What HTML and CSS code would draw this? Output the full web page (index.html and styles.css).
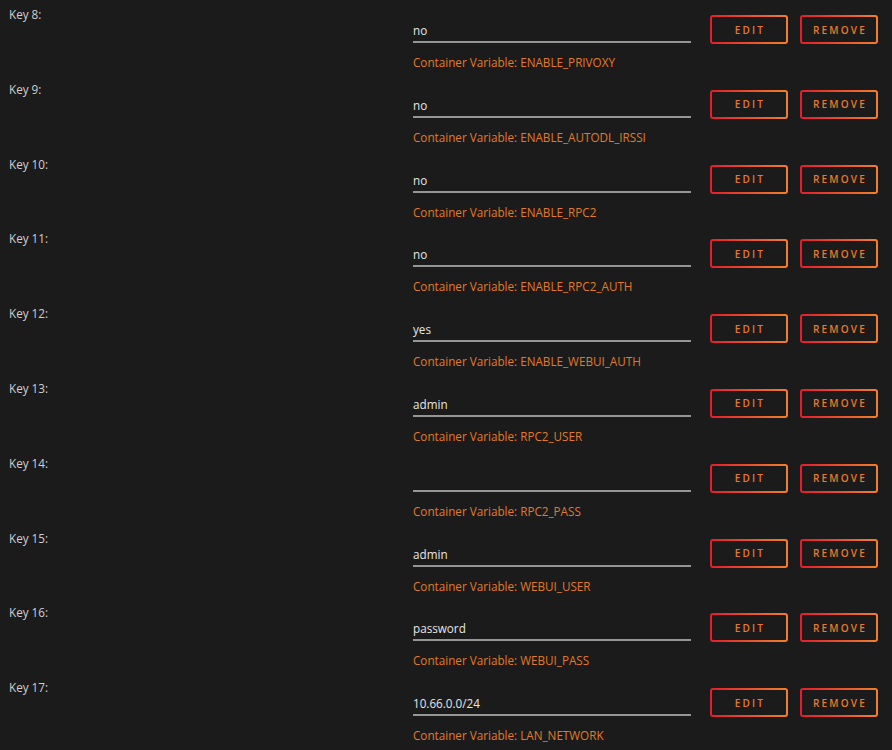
FILE: index.html
```html
<!DOCTYPE html>
<html>
<head>
<meta charset="utf-8">
<link rel="stylesheet" href="styles.css">
</head>
<body>
<div class="list">
  <div class="row"><div class="label">Key 8:</div><div class="field"><div class="value">no</div><div class="hint">Container Variable: ENABLE_PRIVOXY</div></div><div class="actions"><button class="btn">EDIT</button><button class="btn">REMOVE</button></div></div>
  <div class="row"><div class="label">Key 9:</div><div class="field"><div class="value">no</div><div class="hint">Container Variable: ENABLE_AUTODL_IRSSI</div></div><div class="actions"><button class="btn">EDIT</button><button class="btn">REMOVE</button></div></div>
  <div class="row"><div class="label">Key 10:</div><div class="field"><div class="value">no</div><div class="hint">Container Variable: ENABLE_RPC2</div></div><div class="actions"><button class="btn">EDIT</button><button class="btn">REMOVE</button></div></div>
  <div class="row"><div class="label">Key 11:</div><div class="field"><div class="value">no</div><div class="hint">Container Variable: ENABLE_RPC2_AUTH</div></div><div class="actions"><button class="btn">EDIT</button><button class="btn">REMOVE</button></div></div>
  <div class="row"><div class="label">Key 12:</div><div class="field"><div class="value">yes</div><div class="hint">Container Variable: ENABLE_WEBUI_AUTH</div></div><div class="actions"><button class="btn">EDIT</button><button class="btn">REMOVE</button></div></div>
  <div class="row"><div class="label">Key 13:</div><div class="field"><div class="value">admin</div><div class="hint">Container Variable: RPC2_USER</div></div><div class="actions"><button class="btn">EDIT</button><button class="btn">REMOVE</button></div></div>
  <div class="row"><div class="label">Key 14:</div><div class="field"><div class="value"></div><div class="hint">Container Variable: RPC2_PASS</div></div><div class="actions"><button class="btn">EDIT</button><button class="btn">REMOVE</button></div></div>
  <div class="row"><div class="label">Key 15:</div><div class="field"><div class="value">admin</div><div class="hint">Container Variable: WEBUI_USER</div></div><div class="actions"><button class="btn">EDIT</button><button class="btn">REMOVE</button></div></div>
  <div class="row"><div class="label">Key 16:</div><div class="field"><div class="value">password</div><div class="hint">Container Variable: WEBUI_PASS</div></div><div class="actions"><button class="btn">EDIT</button><button class="btn">REMOVE</button></div></div>
  <div class="row"><div class="label">Key 17:</div><div class="field"><div class="value">10.66.0.0/24</div><div class="hint">Container Variable: LAN_NETWORK</div></div><div class="actions"><button class="btn">EDIT</button><button class="btn">REMOVE</button></div></div>
</div>
</body>
</html>
```
FILE: styles.css
```css
html, body {
  margin: 0;
  padding: 0;
  background: #1c1b1b;
}
body {
  font-family: "Open Sans", "DejaVu Sans", sans-serif;
  font-size: 11.7px;
  color: #d0d0d0;
}
.list {
  display: flex;
  flex-direction: column;
}
.row {
  display: flex;
  height: 74.8px;
  box-sizing: border-box;
}
.label {
  width: 404px;
  padding-left: 9px;
  padding-top: 5px;
  line-height: 18px;
  color: #d0d0d0;
}
.field {
  width: 278px;
  padding-top: 20px;
}
.value {
  height: 21px;
  line-height: 20px;
  border-bottom: 2px solid #959595;
  color: #e6e6e6;
}
.hint {
  margin-top: 11px;
  line-height: 16px;
  color: #e07a2c;
}
.actions {
  display: flex;
  gap: 12px;
  margin-left: 19px;
  padding-top: 15px;
  align-items: flex-start;
}
.btn {
  width: 78px;
  height: 29px;
  box-sizing: border-box;
  border: 2px solid transparent;
  border-radius: 3px;
  background:
    linear-gradient(#1c1b1b, #1c1b1b) padding-box,
    linear-gradient(90deg, #e51d2b, #f0802d) border-box;
  color: #e67a2e;
  font-family: "Open Sans", "DejaVu Sans", sans-serif;
  font-weight: 600;
  font-size: 10px;
  letter-spacing: 2.2px;
  padding: 0 0 0 2px;
  cursor: pointer;
}
```
